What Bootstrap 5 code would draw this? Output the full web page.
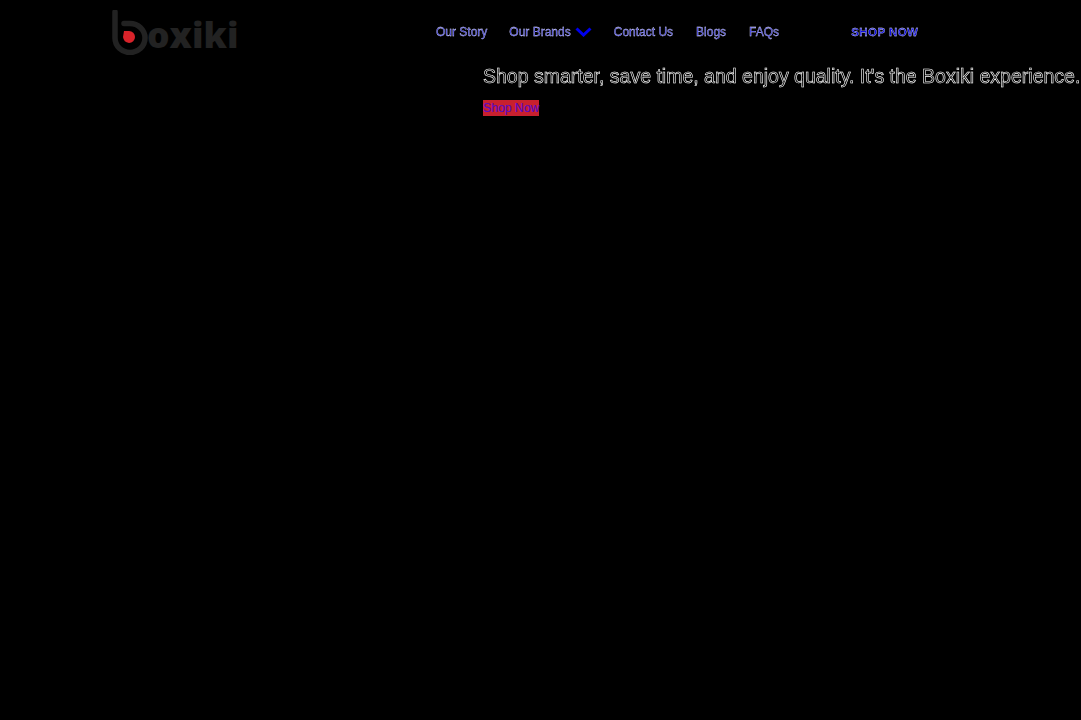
<!DOCTYPE html>
<html lang="en">

<head>
  <meta charset="UTF-8">
  <meta name="viewport" content="width=device-width, initial-scale=1.0">
  <title>Boxiki</title>
  <link href="https://cdn.jsdelivr.net/npm/bootstrap@5.3.3/dist/css/bootstrap.min.css" rel="stylesheet">
  <script src="https://cdn.jsdelivr.net/npm/bootstrap@5.3.3/dist/js/bootstrap.bundle.min.js"></script>
  <style>
    body {
      background-color: #000;
      font-family: "Liberation Sans", Arial, sans-serif;
    }

    .top-bar {
      height: 64px;
      padding-left: 112px;
    }

    .brand-box {
      width: 324px;
    }

    .brand-logo {
      margin-top: 1px;
    }

    .brand-name {
      color: #222;
      font-family: "Open Sans", sans-serif;
      font-size: 35.5px;
      font-weight: 800;
      line-height: 1;
      margin-left: -1px;
      margin-top: 8px;
    }

    .menu-link {
      color: #2a2ad0;
      font-size: 12px;
      line-height: 14px;
      text-decoration: none;
      -webkit-text-stroke: 0.3px #e0e0ff;
      will-change: opacity;
    }

    .menu-items {
      gap: 22px;
    }

    .menu-later {
      margin-left: 1px;
    }

    .shop-top {
      margin-left: 50px;
      font-weight: 700;
      font-size: 11.5px;
      letter-spacing: 0.45px;
      color: #1010e0;
    }

    .hero-box {
      padding-left: 483px;
    }

    .hero-line {
      color: #000;
      font-size: 19.5px;
      line-height: 24px;
      white-space: nowrap;
      -webkit-text-stroke: 0.6px #fff;
      margin: 0 0 7px 0;
      will-change: opacity;
    }

    .hero-btn {
      background-color: #c8202e;
      color: #5a0cc0;
      font-size: 12.2px;
      line-height: 16px;
      text-decoration: none;
      -webkit-text-stroke: 0.2px #5a0cc0;
    }
  </style>
</head>

<body>
  <header class="top-bar d-flex align-items-center">
    <div class="brand-box d-flex align-items-start">
      <svg class="brand-logo" width="36" height="45" viewBox="0 0 36 45">
        <path d="M3 2V28A15 14.5 0 1 0 18 13.5H12" fill="none" stroke="#222" stroke-width="5.5" stroke-linecap="round"/>
        <path d="M12 21H17A6 6 0 0 1 17 33A7 7 0 0 1 11 27Z" fill="#d8232a"/>
      </svg>
      <span class="brand-name">oxiki</span>
    </div>
    <nav class="menu-items d-flex align-items-center">
      <a class="menu-link" href="#">Our Story</a>
      <a class="menu-link d-flex align-items-center gap-1" href="#">Our Brands
        <svg width="17" height="10" viewBox="0 0 17 10"><path d="M1.5 1.5L8.5 8L15.5 1.5" fill="none" stroke="#0000ee" stroke-width="3"/></svg>
      </a>
      <a class="menu-link" href="#">Contact Us</a>
      <a class="menu-link menu-later" href="#">Blogs</a>
      <a class="menu-link menu-later" href="#">FAQs</a>
      <a class="menu-link shop-top" href="#">SHOP NOW</a>
    </nav>
  </header>
  <main class="hero-box">
    <p class="hero-line">Shop smarter, save time, and enjoy quality. It's the Boxiki experience.</p>
    <a class="hero-btn d-inline-block" href="#">Shop Now</a>
  </main>
</body>
</html>
